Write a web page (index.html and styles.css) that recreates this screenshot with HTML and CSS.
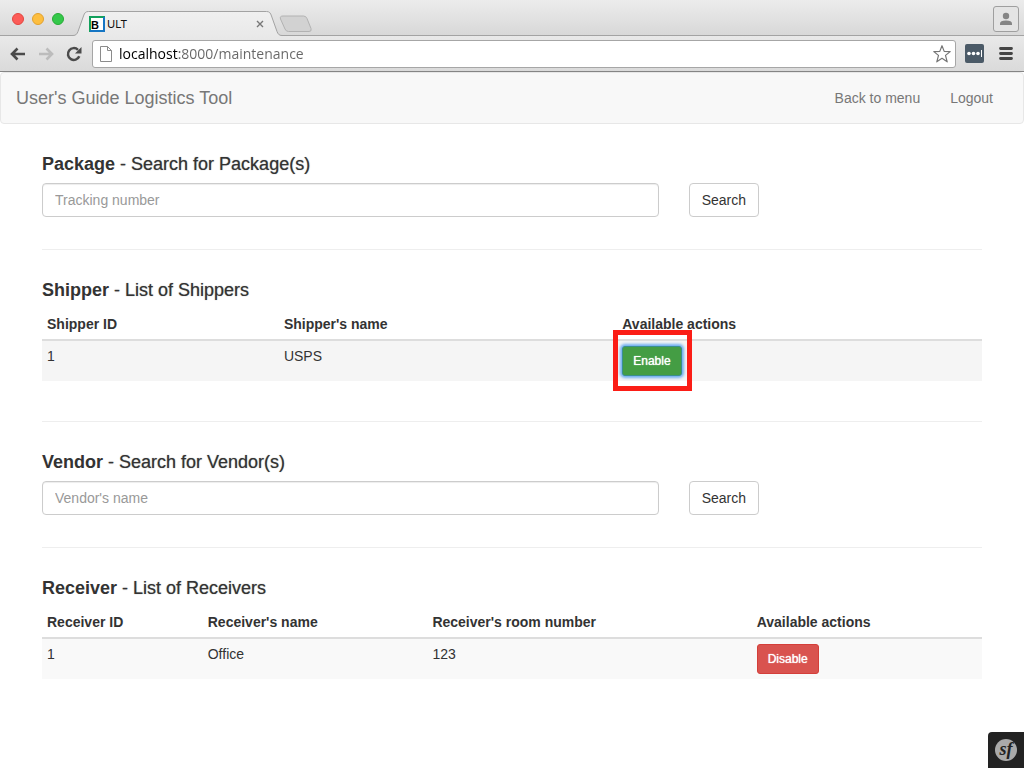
FILE: index.html
```html
<!DOCTYPE html>
<html lang="en">
<head>
<meta charset="utf-8">
<meta name="viewport" content="width=device-width, initial-scale=1">
<title>ULT</title>
<link rel="stylesheet" href="styles.css">
</head>
<body>
<header class="browser">
  <div class="tabstrip">
    <div class="lights">
      <button class="light light-close" aria-label="Close window"></button>
      <button class="light light-min" aria-label="Minimize window"></button>
      <button class="light light-max" aria-label="Zoom window"></button>
    </div>
    <div class="tab">
      <svg class="tab-shape" viewBox="0 0 210 25" aria-hidden="true">
        <defs><linearGradient id="tabfill" x1="0" y1="0" x2="0" y2="1"><stop offset="0" stop-color="#f0f0f0"/><stop offset="1" stop-color="#e9e9e9"/></linearGradient></defs>
        <path d="M0 25V24.500C3 24.500 4 23 5 20.500L10.500 5C11.500 2 12.500.500 15.500.500H193.500C196.500.500 197.500 2 198.500 5L204 20.500C205 23 206 24.500 209 24.500V25Z" fill="url(#tabfill)"/>
        <path d="M0 24.500C3 24.500 4 23 5 20.500L10.500 5C11.500 2 12.500.500 15.500.500H193.500C196.500.500 197.500 2 198.500 5L204 20.500C205 23 206 24.500 209 24.500" fill="none" stroke="#a3a3a3"/>
      </svg>
      <svg class="favicon" viewBox="0 0 16 16" aria-hidden="true">
        <path d="M0 0H16V16H0Z" fill="#fff"/>
        <path d="M1 16V1H16" fill="none" stroke="#12a05c" stroke-width="2"/>
        <path d="M15 1V15H1" fill="none" stroke="#1676c4" stroke-width="2"/>
        <text x="2" y="13" class="favicon-text">B</text>
      </svg>
      <span class="tab-title">ULT</span>
      <button class="tab-close" aria-label="Close tab"><svg width="8" height="8" viewBox="0 0 8 8"><path d="M1 1L7 7M7 1L1 7" stroke="#777" stroke-width="1.400" fill="none"/></svg></button>
    </div>
    <button class="newtab" aria-label="New tab">
      <svg width="34" height="18" viewBox="0 0 34 18"><path d="M4 1H24.500Q27 1 28 3.500L32 13.500Q33 16.500 30 16.500H9.500Q7 16.500 6 14L1.500 4Q.500 1 4 1Z" fill="#d2d2d2" stroke="#b2b2b2"/></svg>
    </button>
    <button class="profile" aria-label="Profile"><svg width="14" height="14" viewBox="0 0 14 14"><circle cx="7" cy="4" r="3.200" fill="#858585"/><path d="M1 13V11.500Q1 8.500 7 8.500T13 11.500V13Z" fill="#858585"/></svg></button>
  </div>
  <div class="toolbar">
    <button class="tool" aria-label="Back"><svg width="16" height="14" viewBox="0 0 16 14"><path d="M15 7H2.500M7.500 1.500L2 7L7.500 12.500" fill="none" stroke="#4b4b4b" stroke-width="2.600"/></svg></button>
    <button class="tool" aria-label="Forward"><svg width="16" height="14" viewBox="0 0 16 14"><path d="M1 7H13.500M8.500 1.500L14 7L8.500 12.500" fill="none" stroke="#bcbcbc" stroke-width="2.600"/></svg></button>
    <button class="tool" aria-label="Reload"><svg width="16" height="16" viewBox="0 0 16 16"><path d="M13.300 10.300A5.900 5.900 0 1 1 12 3.800" fill="none" stroke="#4b4b4b" stroke-width="2.500"/><path d="M15.500 1V7.500H9Z" fill="#4b4b4b"/></svg></button>
    <div class="omnibox">
      <svg class="doc" width="12" height="16" viewBox="0 0 12 16"><path d="M.500.500H7.500L11.500 4.500V15.500H.500ZM7.500.500V4.500H11.500" fill="#fff" stroke="#8b8b8b"/></svg>
      <input class="address" type="text" aria-label="Address" value="localhost:8000/maintenance">
      <button class="star" aria-label="Bookmark"><svg width="20" height="20" viewBox="0 0 20 20"><path d="M10 1.700L12.200 7.400L18.200 7.600L13.500 11.400L15.200 17.800L10 14.300L4.800 17.800L6.500 11.400L1.800 7.600L7.800 7.400Z" fill="#fff" stroke="#757575" stroke-width="1.200" stroke-linejoin="round"/></svg></button>
    </div>
    <button class="extension" aria-label="Password manager"><svg width="19" height="19" viewBox="0 0 19 19"><rect width="19" height="19" rx="2" fill="#4b5a67"/><g fill="#fff"><circle cx="4" cy="9.500" r="1.800"/><circle cx="8.500" cy="9.500" r="1.800"/><circle cx="13" cy="9.500" r="1.800"/><path d="M16 6H17V13H16Z"/></g></svg></button>
    <button class="menu" aria-label="Menu"><svg width="14" height="13" viewBox="0 0 14 13"><path d="M1.500 1.500H12.500M1.500 6.500H12.500M1.500 11.500H12.500" stroke="#454545" stroke-width="2.800" stroke-linecap="round"/></svg></button>
  </div>
</header>

<nav class="navbar">
  <a class="brand" href="#">User's Guide Logistics Tool</a>
  <div class="nav-links">
    <a href="#">Back to menu</a>
    <a href="#">Logout</a>
  </div>
</nav>

<main class="container">
  <section>
    <h4><strong>Package</strong> - Search for Package(s)</h4>
    <form class="search">
      <div class="field"><input class="form-control" type="text" placeholder="Tracking number" aria-label="Tracking number"></div>
      <button class="btn" type="button">Search</button>
    </form>
  </section>
  <hr>
  <section>
    <h4><strong>Shipper</strong> - List of Shippers</h4>
    <table class="shippers">
      <thead><tr><th class="s-id">Shipper ID</th><th class="s-name">Shipper's name</th><th>Available actions</th></tr></thead>
      <tbody><tr><td>1</td><td>USPS</td><td><span class="marked"><button class="btn-sm enable" type="button">Enable</button></span></td></tr></tbody>
    </table>
  </section>
  <hr>
  <section>
    <h4><strong>Vendor</strong> - Search for Vendor(s)</h4>
    <form class="search">
      <div class="field"><input class="form-control" type="text" placeholder="Vendor's name" aria-label="Vendor's name"></div>
      <button class="btn" type="button">Search</button>
    </form>
  </section>
  <hr>
  <section>
    <h4><strong>Receiver</strong> - List of Receivers</h4>
    <table class="receivers">
      <thead><tr><th class="r-id">Receiver ID</th><th class="r-name">Receiver's name</th><th class="r-room">Receiver's room number</th><th>Available actions</th></tr></thead>
      <tbody><tr><td>1</td><td>Office</td><td>123</td><td><button class="btn-sm disable" type="button">Disable</button></td></tr></tbody>
    </table>
  </section>
</main>

<button class="debug" aria-label="Symfony toolbar">
  <svg width="24" height="24" viewBox="0 0 24 24"><circle cx="12" cy="12" r="11" fill="#aaa"/><text x="12" y="17" class="debug-text">sf</text></svg>
</button>
</body>
</html>
```
FILE: styles.css
```css
* { box-sizing: border-box; }
body {
  margin: 0;
  background: #fff;
  color: #333;
  font: 14px/20px "Helvetica Neue", "Liberation Sans", Arial, sans-serif;
}
button, input { font: inherit; color: inherit; margin: 0; }
svg { display: block; }

/* Browser window */
.browser button { display: flex; align-items: center; justify-content: center; padding: 0; border: 0; background: none; }
.tabstrip {
  display: flex;
  align-items: center;
  height: 36px;
  padding: 0 5px 0 12px;
  border-bottom: 1px solid #a3a3a3;
  background: linear-gradient(#ececec, #d8d8d8);
}
.lights { display: flex; gap: 8px; width: 61px; padding-top: 3px; }
.browser .light { width: 12px; height: 12px; border: 1px solid; border-radius: 50%; }
.browser .light-close { background: #fc5b57; border-color: #e2463f; }
.browser .light-min { background: #fdbe3f; border-color: #e1a12f; }
.browser .light-max { background: #34c84a; border-color: #27aa35; }
.tab {
  position: relative;
  align-self: flex-end;
  display: flex;
  align-items: center;
  width: 210px;
  height: 25px;
  margin-bottom: -1px;
  padding: 0 18px 0 16px;
}
.tab-shape { position: absolute; inset: 0; width: 100%; height: 100%; }
.favicon { position: relative; width: 16px; height: 16px; }
.favicon-text { font: bold 11px "Liberation Sans", sans-serif; }
.tab-title { position: relative; flex: 1; padding-left: 2px; color: #111; font: 11px/16px Inter, sans-serif; }
.tab-close { position: relative; width: 10px; height: 16px; }
.newtab { margin-top: 13px; margin-left: -4px; }
.browser .profile { width: 26px; height: 26px; margin-top: 3px; margin-left: auto; border: 1px solid #9f9f9f; border-radius: 3px; background: #e4e4e4; }
.toolbar {
  display: flex;
  align-items: center;
  height: 36px;
  padding: 0 11px 0 4px;
  border-bottom: 1px solid #858585;
  background: linear-gradient(#e9e9e9, #dadada);
}
.tool { width: 28px; height: 28px; }
.omnibox {
  display: flex;
  align-items: center;
  flex: 1;
  height: 28px;
  margin-left: 4px;
  padding: 0 3px 0 7px;
  border: 1px solid #a6a6a6;
  border-radius: 3px;
  background: #fff;
}
.address {
  flex: 1;
  min-width: 0;
  height: 24px;
  margin-left: 7px;
  padding: 0;
  border: 0;
  outline: 0;
  font: 14px/20px "Open Sans", sans-serif;
  color: transparent;
  caret-color: #000;
  background: linear-gradient(90deg, #000 60px, #666 60px);
  -webkit-background-clip: text;
  background-clip: text;
}
.extension { margin-left: 9px; }
.menu { margin-left: 15px; }

/* Page */
.navbar {
  display: flex;
  align-items: center;
  justify-content: space-between;
  min-height: 52px;
  padding: 0 30px 0 15px;
  border: 1px solid #e7e7e7;
  border-radius: 4px;
  background: #f8f8f8;
}
.navbar a { color: #777; text-decoration: none; }
.brand { font-size: 18px; }
.nav-links { display: flex; gap: 30px; }
.container { padding: 30px 42px; }
h4 { margin: 0 0 9px; font-size: 18px; line-height: 20px; font-weight: 400; text-shadow: 0 0 1px rgba(51, 51, 51, .6); }
h4 strong { text-shadow: none; }
hr { margin: 32px 0 30px; border: 0; border-top: 1px solid #eee; }
.search { display: flex; margin: 0 -15px; }
.field { width: 66.6667%; padding: 0 15px; }
.form-control {
  display: block;
  width: 100%;
  height: 34px;
  padding: 6px 12px;
  border: 1px solid #ccc;
  border-radius: 4px;
  box-shadow: inset 0 1px 1px rgba(0, 0, 0, .075);
}
.form-control::placeholder { color: #999; opacity: 1; }
.btn { height: 34px; margin-left: 15px; padding: 6px 12px; border: 1px solid #ccc; border-radius: 4px; background: #fff; }
table { width: 100%; margin-bottom: 40px; table-layout: fixed; border-collapse: separate; border-spacing: 0; }
th, td { padding: 5px; text-align: left; vertical-align: top; }
th { border-bottom: 2px solid #ddd; }
td { height: 40px; background: #f9f9f9; }
.shippers td { background: #f5f5f5; }
.s-id { width: 25.2%; }
.s-name { width: 36%; }
.r-id { width: 17.1%; }
.r-name { width: 23.9%; }
.r-room { width: 34.5%; }
.btn-sm { display: block; height: 30px; padding: 5px 10px; border: 1px solid; border-radius: 3px; color: #fff; font-size: 12px; line-height: 18px; text-shadow: 0 0 1px #fff; }
.enable { background: #449d44; border-color: #398f8f; box-shadow: 0 0 3px 2px #6cacf0; }
.disable { background: #d9534f; border-color: #d43f3a; }
.marked { position: relative; display: inline-block; vertical-align: top; }
.marked::after { content: ""; position: absolute; inset: -16px -10px -15px -9px; border: 5px solid #fb1d16; pointer-events: none; }
.debug {
  position: fixed;
  right: 0;
  bottom: 0;
  display: flex;
  align-items: center;
  justify-content: center;
  width: 36px;
  height: 36px;
  padding: 0;
  border: 0;
  border-radius: 4px 0 0 0;
  background: #222;
}
.debug-text { font: italic bold 18px "Liberation Serif", serif; text-anchor: middle; fill: #222; }
```
